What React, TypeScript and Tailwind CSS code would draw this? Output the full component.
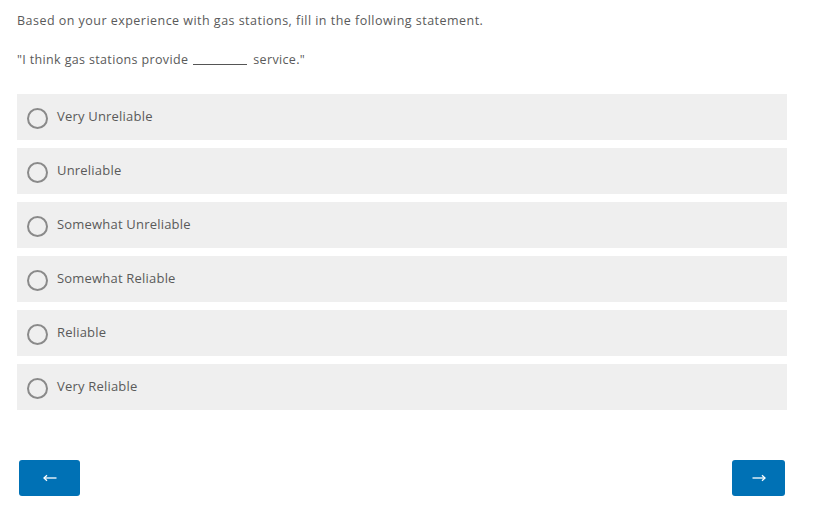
import React from "react";

const options = [
  "Very Unreliable",
  "Unreliable",
  "Somewhat Unreliable",
  "Somewhat Reliable",
  "Reliable",
  "Very Reliable",
];

function Arrow({ dir }: { dir: "left" | "right" }) {
  return (
    <svg width="14" height="8" viewBox="0 0 14 8" fill="none" stroke="white" strokeWidth="1.3">
      {dir === "left" ? (
        <>
          <line x1="1" y1="4" x2="13.5" y2="4" />
          <polyline points="4,1.2 1,4 4,6.8" />
        </>
      ) : (
        <>
          <line x1="0.5" y1="4" x2="13" y2="4" />
          <polyline points="10,1.2 13,4 10,6.8" />
        </>
      )}
    </svg>
  );
}

export default function App() {
  return (
    <div
      className="w-[821px] h-[523px] bg-white text-[#5a5a5a] overflow-hidden"
      style={{ fontFamily: '"Open Sans", "Liberation Sans", sans-serif' }}
    >
      <div className="pl-[17px] pr-[34px]">
        <p className="pt-[13px] text-[12.5px] leading-[16px] tracking-[0.47px]">
          Based on your experience with gas stations, fill in the following statement.
        </p>
        <p className="mt-[23px] text-[12.5px] leading-[16px] tracking-[0.35px] flex items-end">
          <span>"I think gas stations provide</span>
          <span className="inline-block w-[54px] border-b border-[#555] ml-[5px] mr-[6px] mb-[3px]" />
          <span>service."</span>
        </p>
        <div className="mt-[26px] flex flex-col gap-[8px]">
          {options.map((o) => (
            <label
              key={o}
              className="h-[46px] bg-[#efefef] flex items-center pl-[10px] cursor-pointer"
            >
              <span className="w-[21px] h-[21px] rounded-full border-2 border-[#8a8a8a] mt-[2px]" />
              <span className="ml-[9px] text-[13px] tracking-[0.2px] text-[#5a5a5a]">{o}</span>
            </label>
          ))}
        </div>
        <div className="mt-[50px] flex justify-between pl-[2px] pr-[2px]">
          <button className="w-[61px] h-[36px] bg-[#0071b5] rounded-[3px] flex items-center justify-center">
            <Arrow dir="left" />
          </button>
          <button className="w-[53px] h-[36px] bg-[#0071b5] rounded-[3px] flex items-center justify-center">
            <Arrow dir="right" />
          </button>
        </div>
      </div>
    </div>
  );
}
